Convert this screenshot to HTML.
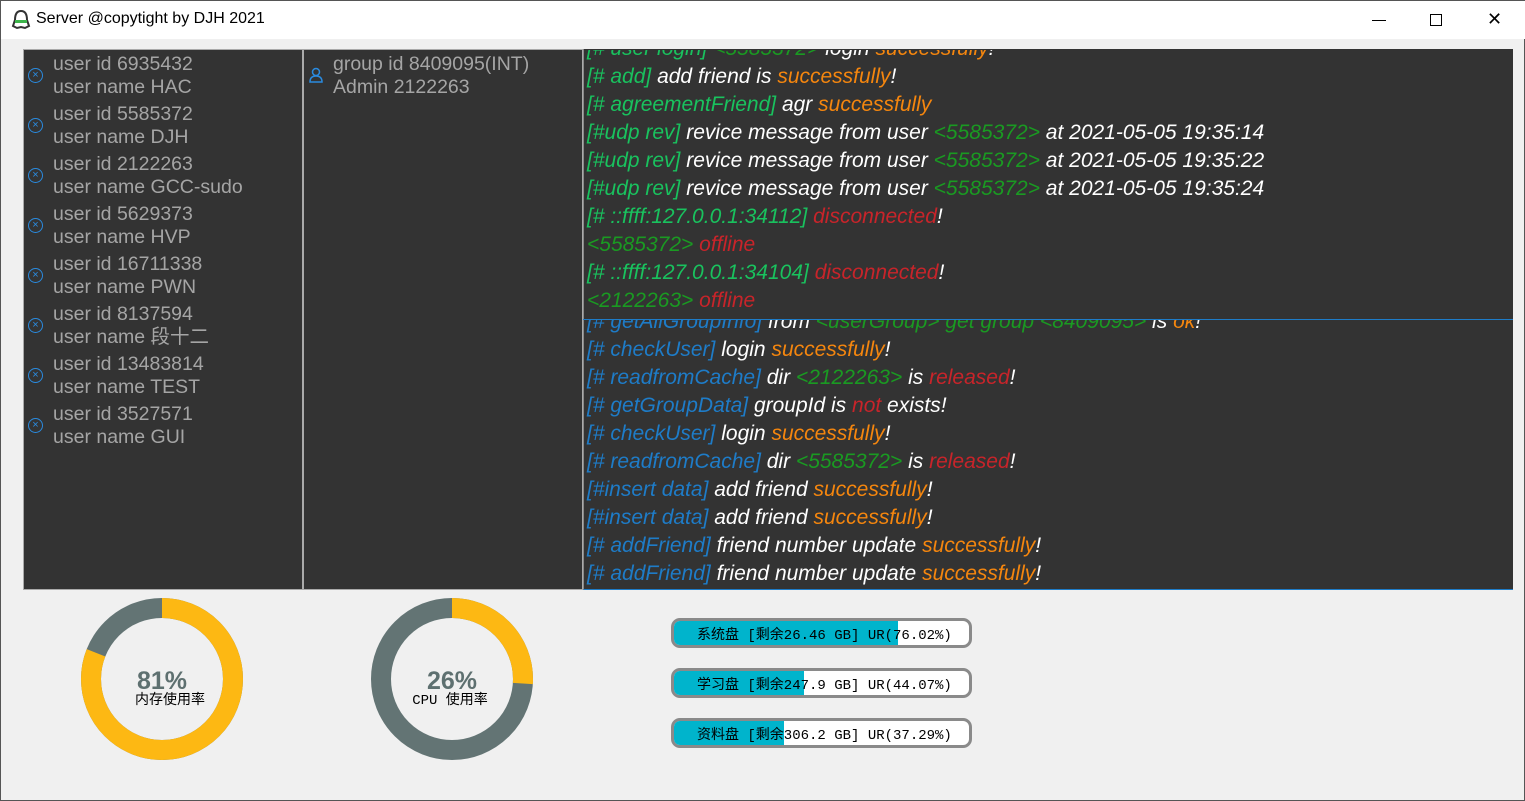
<!DOCTYPE html>
<html><head><meta charset="utf-8"><style>
*{margin:0;padding:0;box-sizing:border-box}
body{width:1525px;height:801px;background:#f0f0f0;position:relative;overflow:hidden;font-family:"Liberation Sans","Noto Sans CJK SC",sans-serif;border:1px solid #555}
.title{position:absolute;left:0;top:0;width:1525px;height:38px;background:#fff}
.title span{position:absolute;left:35px;top:9px;font-size:16px;color:#000}
.pane{position:absolute;background:#333;top:48px;height:541px}
.user{position:absolute;left:0;font-size:19.5px;color:#a5a5a5;line-height:23px;white-space:nowrap}
.ic{position:absolute;width:15px;height:15px;border:1.5px solid #2a8be0;border-radius:50%;color:#2a8be0;font-size:11px;line-height:12px;text-align:center}
.log{position:absolute;left:586px;font-style:italic;font-size:21px;line-height:28px;color:#fff;white-space:nowrap;font-family:"Liberation Sans",sans-serif}
.g{color:#19c25e}.dg{color:#1a9a22}.o{color:#f5860e}.r{color:#c8242a}.b{color:#1e7cc8}
.bar{position:absolute;left:670px;width:301px;height:30px;border:3px solid #8a8a8a;border-radius:9px;background:#fff;overflow:hidden}
.bar i{position:absolute;left:0;top:0;bottom:0;background:#00b4cc}
.bar span{position:absolute;left:23px;top:3px;font-size:14px;font-family:"Liberation Mono","Noto Sans CJK SC",monospace;color:#000;white-space:nowrap}
</style></head><body>
<div class="title"><svg style="position:absolute;left:10px;top:8px" width="20" height="22" viewBox="0 0 20 22"><path d="M4 11 Q4 2 10 2 Q16 2 16 11 L18 17 L14 19 L10 18 L6 19 L2 17Z" fill="none" stroke="#333" stroke-width="2"/><rect x="4" y="11" width="12" height="3" fill="#3cb44a"/></svg><span>Server @copytight by DJH 2021</span>
<div style="position:absolute;left:1371px;top:19px;width:14px;height:1px;background:#000"></div>
<div style="position:absolute;left:1429px;top:13px;width:12px;height:12px;border:1px solid #000"></div>
<div style="position:absolute;left:1486px;top:18px;font-size:18px;line-height:0;color:#000">✕</div>
</div>
<div class="pane" style="left:22px;width:280px;border:1px solid #aaa"></div>
<div class="pane" style="left:302px;width:280px;border:1px solid #aaa"></div>
<div class="pane" style="left:582px;width:930px;border-left:1px solid #888;border-bottom:1px solid #1e7cc8"></div>
<div style="position:absolute;left:582px;top:318px;width:930px;height:1px;background:#1e7cc8"></div>

<div style="position:absolute;left:27px;top:52px;width:270px">
<div class="user" style="top:0"><div class="ic" style="left:0;top:15px">×</div><div style="margin-left:25px">user id 6935432<br>user name HAC</div></div>
<div class="user" style="top:50px"><div class="ic" style="left:0;top:15px">×</div><div style="margin-left:25px">user id 5585372<br>user name DJH</div></div>
<div class="user" style="top:100px"><div class="ic" style="left:0;top:15px">×</div><div style="margin-left:25px">user id 2122263<br>user name GCC-sudo</div></div>
<div class="user" style="top:150px"><div class="ic" style="left:0;top:15px">×</div><div style="margin-left:25px">user id 5629373<br>user name HVP</div></div>
<div class="user" style="top:200px"><div class="ic" style="left:0;top:15px">×</div><div style="margin-left:25px">user id 16711338<br>user name PWN</div></div>
<div class="user" style="top:250px"><div class="ic" style="left:0;top:15px">×</div><div style="margin-left:25px">user id 8137594<br>user name 段十二</div></div>
<div class="user" style="top:300px"><div class="ic" style="left:0;top:15px">×</div><div style="margin-left:25px">user id 13483814<br>user name TEST</div></div>
<div class="user" style="top:350px"><div class="ic" style="left:0;top:15px">×</div><div style="margin-left:25px">user id 3527571<br>user name GUI</div></div>
</div>
<div class="user" style="left:307px;top:52px"><svg style="position:absolute;left:0;top:14px" width="16" height="16" viewBox="0 0 16 16"><circle cx="8" cy="5" r="3.5" fill="none" stroke="#2a8be0" stroke-width="1.5"/><path d="M2 15 Q2 9 8 9 Q14 9 14 15Z" fill="none" stroke="#2a8be0" stroke-width="1.5"/></svg><div style="margin-left:25px">group id 8409095(INT)<br>Admin 2122263</div></div>

<div style="position:absolute;left:583px;top:49px;width:928px;height:269px;overflow:hidden">
<div class="log" style="left:3px;top:-15px">
<div><span class="g">[# user login]</span> <span class="dg">&lt;5585372&gt;</span> login <span class="o">successfully</span>!</div>
<div><span class="g">[# add]</span> add friend is <span class="o">successfully</span>!</div>
<div><span class="g">[# agreementFriend]</span> agr <span class="o">successfully</span></div>
<div><span class="g">[#udp rev]</span> revice message from user <span class="dg">&lt;5585372&gt;</span> at 2021-05-05 19:35:14</div>
<div><span class="g">[#udp rev]</span> revice message from user <span class="dg">&lt;5585372&gt;</span> at 2021-05-05 19:35:22</div>
<div><span class="g">[#udp rev]</span> revice message from user <span class="dg">&lt;5585372&gt;</span> at 2021-05-05 19:35:24</div>
<div><span class="g">[# ::ffff:127.0.0.1:34112]</span> <span class="r">disconnected</span>!</div>
<div><span class="dg">&lt;5585372&gt;</span> <span class="r">offline</span></div>
<div><span class="g">[# ::ffff:127.0.0.1:34104]</span> <span class="r">disconnected</span>!</div>
<div><span class="dg">&lt;2122263&gt;</span> <span class="r">offline</span></div>
</div></div>
<div style="position:absolute;left:583px;top:319px;width:928px;height:269px;overflow:hidden">
<div class="log" style="left:3px;top:-12px">
<div><span class="b">[# getAllGroupInfo]</span> from <span class="dg">&lt;userGroup&gt; get group &lt;8409095&gt;</span> is <span class="o">ok</span>!</div>
<div><span class="b">[# checkUser]</span> login <span class="o">successfully</span>!</div>
<div><span class="b">[# readfromCache]</span> dir <span class="dg">&lt;2122263&gt;</span> is <span class="r">released</span>!</div>
<div><span class="b">[# getGroupData]</span> groupId is <span class="r">not</span> exists!</div>
<div><span class="b">[# checkUser]</span> login <span class="o">successfully</span>!</div>
<div><span class="b">[# readfromCache]</span> dir <span class="dg">&lt;5585372&gt;</span> is <span class="r">released</span>!</div>
<div><span class="b">[#insert data]</span> add friend <span class="o">successfully</span>!</div>
<div><span class="b">[#insert data]</span> add friend <span class="o">successfully</span>!</div>
<div><span class="b">[# addFriend]</span> friend number update <span class="o">successfully</span>!</div>
<div><span class="b">[# addFriend]</span> friend number update <span class="o">successfully</span>!</div>
</div></div>

<svg style="position:absolute;left:0;top:590px" width="600" height="180">
<g transform="translate(161,88) rotate(-90)"><circle r="71" fill="none" stroke="#637474" stroke-width="20"/><circle r="71" fill="none" stroke="#fdb813" stroke-width="20" stroke-dasharray="361.3 500"/></g>
<g transform="translate(451,88) rotate(-90)"><circle r="71" fill="none" stroke="#637474" stroke-width="20"/><circle r="71" fill="none" stroke="#fdb813" stroke-width="20" stroke-dasharray="116 500"/></g>
<text x="161" y="98" text-anchor="middle" font-family="Liberation Sans" font-weight="bold" font-size="25" fill="#5e7070">81%</text>
<text x="451" y="98" text-anchor="middle" font-family="Liberation Sans" font-weight="bold" font-size="25" fill="#5e7070">26%</text>
<text x="169" y="113" text-anchor="middle" font-family="Noto Sans CJK SC" font-size="14" fill="#000">内存使用率</text>
<text x="449" y="113" text-anchor="middle" font-family="Liberation Mono,Noto Sans CJK SC" font-size="14" fill="#000">CPU 使用率</text>
</svg>
<div class="bar" style="top:617px"><i style="width:224px"></i><span>系统盘 [剩余26.46 GB] UR(76.02%)</span></div>
<div class="bar" style="top:667px"><i style="width:130px"></i><span>学习盘 [剩余247.9 GB] UR(44.07%)</span></div>
<div class="bar" style="top:717px"><i style="width:110px"></i><span>资料盘 [剩余306.2 GB] UR(37.29%)</span></div>
</body></html>
